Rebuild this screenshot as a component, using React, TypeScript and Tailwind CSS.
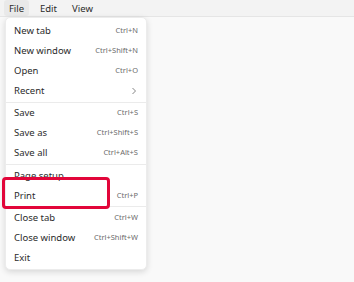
import React from "react";

type Item = { label: string; shortcut?: string; sub?: boolean } | "sep";

const items: Item[] = [
  { label: "New tab", shortcut: "Ctrl+N" },
  { label: "New window", shortcut: "Ctrl+Shift+N" },
  { label: "Open", shortcut: "Ctrl+O" },
  { label: "Recent", sub: true },
  "sep",
  { label: "Save", shortcut: "Ctrl+S" },
  { label: "Save as", shortcut: "Ctrl+Shift+S" },
  { label: "Save all", shortcut: "Ctrl+Alt+S" },
  "sep",
  { label: "Page setup" },
  { label: "Print", shortcut: "Ctrl+P" },
  "sep",
  { label: "Close tab", shortcut: "Ctrl+W" },
  { label: "Close window", shortcut: "Ctrl+Shift+W" },
  { label: "Exit" },
];

export default function App() {
  return (
    <div
      className="w-[354px] h-[282px] bg-[#f9f9f9] relative overflow-hidden text-[#2b2b2b]"
      style={{ fontFamily: '"Noto Sans", "Open Sans", sans-serif' }}
    >
      <div className="h-[17px] bg-[#f3f3f3] border-b border-[#e5e5e5] flex items-stretch pl-[4px]">
        <div className="w-[25px] h-[16px] bg-[#e9e9e9] rounded-[3px] flex items-center justify-center text-[9.5px] leading-none pt-[1px]">
          File
        </div>
        <div className="w-[39px] flex items-center justify-center text-[9.5px] leading-none pt-[1px]">
          Edit
        </div>
        <div className="w-[29px] flex items-center justify-center text-[9.5px] leading-none pt-[1px]">
          View
        </div>
      </div>
      <div className="absolute left-[5px] top-[17px] w-[142px] bg-white rounded-[5px] shadow-[0_2px_6px_rgba(0,0,0,0.14)] border border-[#ececec] pt-[3px] pb-[1px]">
        {items.map((it, i) =>
          it === "sep" ? (
            <div key={i} className="h-px bg-[#ebebeb] my-[0.6px]" />
          ) : (
            <div
              key={i}
              className="h-[20px] flex items-center justify-between pl-[8px] pr-[8px]"
            >
              <span className="text-[9.5px] leading-none">{it.label}</span>
              {it.shortcut && (
                <span className="text-[7.5px] leading-none text-[#6b6b6b]">
                  {it.shortcut}
                </span>
              )}
              {it.sub && (
                <svg width="6" height="8" viewBox="0 0 6 8" className="mr-[1px]">
                  <path d="M1.5 1 L4.5 4 L1.5 7" fill="none" stroke="#777" strokeWidth="0.9" />
                </svg>
              )}
            </div>
          )
        )}
      </div>
      <div className="absolute left-[2px] top-[177px] w-[108px] h-[32px] border-[3px] border-[#e2063a] rounded-[4px]" />
    </div>
  );
}
